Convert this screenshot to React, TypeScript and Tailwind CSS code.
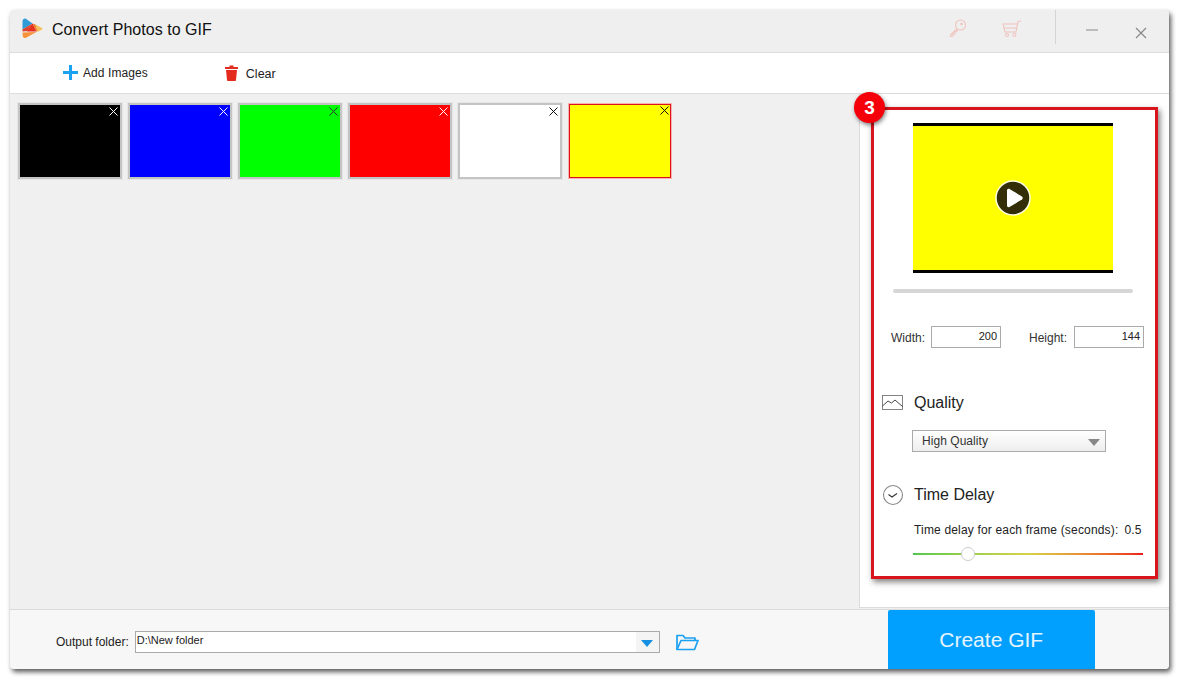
import React from "react";

const thumbs = [
  { c: "bg-[#000000]", x: "#ffffff" },
  { c: "bg-[#0000ff]", x: "#ffffff" },
  { c: "bg-[#00ff00]", x: "#333333" },
  { c: "bg-[#ff0000]", x: "#ffffff" },
  { c: "bg-[#ffffff]", x: "#111111" },
  { c: "bg-[#ffff00]", x: "#111111", sel: true },
];

function X({ color }: { color: string }) {
  return (
    <svg width="9" height="9" viewBox="0 0 9 9" className="absolute top-[2px] right-[2px]">
      <path d="M0.5 0.5L8.5 8.5M8.5 0.5L0.5 8.5" stroke={color} strokeWidth="1" fill="none" />
    </svg>
  );
}

function Logo() {
  return (
    <svg width="22" height="22" viewBox="0 0 22 22">
      <path d="M0.500 3C0.500 1.500 2 0 3.500 0.500L10.500 5.500L0.500 11.500Z" fill="#2f9bd6" />
      <path d="M0.500 11.500L10.500 5.500L5 13L0.500 13.500Z" fill="#d9432c" />
      <path d="M10.500 5.500L14.500 13.500L4.500 13.500Z" fill="#e8301f" />
      <path d="M10.500 5.500L13.500 6.500L15.500 13L14.500 13.500Z" fill="#f0782e" />
      <path d="M13.500 6.500L20 10C20.500 10.500 20.500 11 20 11.500L15.500 14Z" fill="#f5c05a" />
      <path d="M0.500 14.500L14.500 14L4 19.800C2 20.500 1 19.500 0.800 18Z" fill="#f7913a" />
    </svg>
  );
}

export default function App() {
  return (
    <div className="w-[1180px] h-[680px] bg-white pt-[10px] pl-[10px] font-['Liberation_Sans',Arial,sans-serif] text-[#1a1a1a] overflow-hidden">
      <div className="w-[1159px] h-[659px] flex flex-col rounded-[4px] bg-[#f0f0f0] shadow-[2px_3px_5px_rgba(0,0,0,0.65)] overflow-hidden">
        {/* title bar */}
        <div className="h-[43px] shrink-0 flex items-center bg-[#efefef] border-b border-[#dcdcdc] relative">
          <div className="ml-[12px] mt-[-4px] w-[22px] h-[22px]"><Logo /></div>
          <div className="ml-[8px] mt-[-2px] text-[16px] leading-[20px] text-[#111] tracking-[0.03px]">Convert Photos to GIF</div>
          <div className="ml-auto flex items-start h-full">
            <svg width="18" height="18" viewBox="0 0 18 18" className="mt-[9px]" fill="none" stroke="#f0c4bd" strokeWidth="1.1">
              <circle cx="11.500" cy="6" r="5" />
              <circle cx="12.500" cy="5" r="0.800" />
              <path d="M8 9.500L1.500 16L1.500 17.500L4 17L4 15L6 15L6 13L7.500 12.500L9 11" />
            </svg>
            <svg width="20" height="18" viewBox="0 0 20 18" className="ml-[35px] mt-[10px]" fill="none" stroke="#f0c4bd" strokeWidth="1.1">
              <path d="M19 1L16 1.500L14 12L3 12L1 4L15.500 4" />
              <path d="M2 8L15 8" />
              <circle cx="5" cy="15" r="1.500" />
              <circle cx="12.500" cy="15" r="1.500" />
            </svg>
            <div className="ml-[33px] w-px h-[34px] mt-0 bg-[#d4d4d4]" />
            <svg width="12" height="12" viewBox="0 0 12 12" className="ml-[30px] mt-[14px]" fill="none" stroke="#888" strokeWidth="1">
              <path d="M0 6H12" />
            </svg>
            <svg width="12" height="12" viewBox="0 0 12 12" className="ml-[37px] mr-[22px] mt-[17px]" fill="none" stroke="#888" strokeWidth="1.2">
              <path d="M1 1L11 11M11 1L1 11" />
            </svg>
          </div>
        </div>

        {/* toolbar */}
        <div className="h-[41px] shrink-0 flex items-center bg-white border-b border-[#dcdcdc]">
          <svg width="15" height="15" viewBox="0 0 15 15" className="ml-[53px] mt-[-2px]">
            <path d="M6 0H9V6H15V9H9V15H6V9H0V6H6Z" fill="#1ba1f2" />
          </svg>
          <span className="ml-[5px] mt-[-1px] text-[12px] leading-[14px] text-[#222] tracking-[0.08px]">Add Images</span>
          <svg width="13" height="16" viewBox="0 0 13 16" className="ml-[77px]">
            <path d="M4.500 0.500H8.500V2H13V4H0V2H4.500Z" fill="#e32b1e" />
            <path d="M1 5H12L11 15C11 15.500 10.500 16 10 16H3C2.500 16 2 15.500 2 15Z" fill="#e32b1e" />
          </svg>
          <span className="ml-[8px] mt-[2px] text-[12.500px] leading-[14px] text-[#222]">Clear</span>
        </div>

        {/* main */}
        <div className="flex-1 flex min-h-0">
          <div className="flex-1 pl-[8px] pt-[9px] flex items-start gap-[6px]">
            {thumbs.map((t, i) => (
              <div
                key={i}
                className={
                  t.sel
                    ? "w-[104px] h-[76px] border border-[#fbb0b0] shadow-[inset_0_0_0_1px_#d8141c] relative " + t.c
                    : "w-[104px] h-[76px] border-2 border-[#c4c4c4] shadow-[0_0_0_1px_#e6e6e6] relative " + t.c
                }
              >
                <X color={t.x} />
              </div>
            ))}
          </div>
          <div className="w-[310px] shrink-0 mb-px bg-white border-l border-[#dcdcdc] border-b pl-[11px] pt-[13px] relative">
            <div className="w-[287px] h-[472px] border-[3px] border-[#d8141c] shadow-[2px_3px_6px_rgba(0,0,0,0.5)] relative flex flex-col">
              {/* preview */}
              <div className="ml-[39px] mt-[13px] w-[200px] h-[150px] border-y-[3px] border-black bg-[#ffff00] flex items-center justify-center">
                <svg width="36" height="36" viewBox="0 0 36 36">
                  <circle cx="18" cy="18" r="17" fill="#332e07" stroke="#fffde0" strokeWidth="1.500" />
                  <path d="M12 10.500C12 9 13.500 8.500 14.500 9L27 16.500C28 17.200 28 18.800 27 19.500L14.500 27C13.500 27.500 12 27 12 25.500Z" fill="#ffffff" />
                </svg>
              </div>
              <div className="ml-[19px] mt-[16px] w-[240px] h-[4px] rounded-full bg-[#d6d6d6]" />
              {/* size */}
              <div className="mt-[33px] flex items-center text-[12px] text-[#333]">
                <span className="ml-[17px] w-[40px] mt-[1px]">Width:</span>
                <div className="w-[70px] h-[22px] border border-[#aaaaaa] bg-white text-right pr-[3px] leading-[18px] text-[11px] text-[#222]">200</div>
                <span className="ml-[28px] w-[45px] mt-[1px]">Height:</span>
                <div className="w-[70px] h-[22px] border border-[#aaaaaa] bg-white text-right pr-[3px] leading-[18px] text-[11px] text-[#222]">144</div>
              </div>
              {/* quality */}
              <div className="mt-[43px] flex items-center h-[22px]">
                <svg width="21" height="15" viewBox="0 0 21 15" className="ml-[8px] mt-[1px]" fill="none" stroke="#777" strokeWidth="0.9">
                  <rect x="0.500" y="0.500" width="20" height="14" />
                  <path d="M0.500 11L6 6L9.500 8L13 5L20.500 11.500" stroke="#333" />
                </svg>
                <span className="ml-[11px] mt-[2px] text-[16px] leading-[20px] text-[#222]">Quality</span>
              </div>
              <div className="ml-[38px] mt-[17px] w-[194px] h-[22px] border border-[#aaaaaa] bg-gradient-to-b from-white to-[#eeeeee] flex items-center pl-[9px] text-[12px] text-[#333] relative">
                <span className="mt-[-1px] tracking-[0.05px]">High Quality</span>
                <svg width="12" height="7" viewBox="0 0 12 7" className="absolute right-[5px] top-[8px]">
                  <path d="M0 0H12L6 7Z" fill="#888888" />
                </svg>
              </div>
              {/* time delay */}
              <div className="mt-[32px] flex items-center h-[22px]">
                <svg width="22" height="22" viewBox="0 0 22 22" className="ml-[8px]" fill="none">
                  <circle cx="11" cy="11" r="9.500" stroke="#888" strokeWidth="1.100" />
                  <path d="M6.500 10.500L10 13L15 9.500" stroke="#333" strokeWidth="1.100" />
                </svg>
                <span className="ml-[10px] text-[16px] leading-[20px] text-[#222]">Time Delay</span>
              </div>
              <div className="ml-[40px] mt-[17px] text-[12px] leading-[14px] text-[#222] whitespace-nowrap tracking-[0.17px]">
                Time delay for each frame (seconds):<span className="ml-[6px]">0.5</span>
              </div>
              <div className="ml-[39px] mt-[16px] w-[230px] h-[2px] bg-gradient-to-r from-[#4ec94e] via-[#d6d24a] to-[#e81c1c] relative">
                <div className="absolute left-[48px] top-[-6px] w-[14px] h-[14px] rounded-full bg-white border border-[#cccccc]" />
              </div>
            </div>
            {/* badge */}
            <div className="absolute left-[-6px] top-[-2px] w-[31px] h-[31px] rounded-full bg-[#f5000a] shadow-[1px_2px_4px_rgba(0,0,0,0.5)] flex items-center justify-center text-white font-bold text-[19px] leading-none">
              3
            </div>
          </div>
        </div>

        {/* footer */}
        <div className="h-[60px] shrink-0 flex items-start bg-[#f7f7f7] border-t border-[#dcdcdc]">
          <span className="ml-[46px] mt-[25px] text-[12px] leading-[14px] text-[#222]">Output folder:</span>
          <div className="ml-[6px] mt-[21px] w-[525px] h-[22px] border border-[#aaaaaa] bg-white flex items-center pl-[1px] text-[11px] text-[#222] relative">
            <span className="mt-[-3px]">D:\New folder</span>
            <div className="absolute right-0 top-0 h-full w-[23px] bg-[#f4f4f4] flex items-center justify-center">
              <svg width="12" height="7" viewBox="0 0 12 7" className="mt-[3px]">
                <path d="M0 0H12L6 7Z" fill="#1590e0" />
              </svg>
            </div>
          </div>
          <svg width="23" height="17" viewBox="0 0 23 17" className="ml-[16px] mt-[24px]" fill="none" stroke="#1ba1f2" strokeWidth="1.700" strokeLinejoin="round">
            <path d="M1 15.500V1.500H7L9 4H19V6.500" />
            <path d="M1 15.500H18.500L22 6.500H5L1 15.500Z" />
          </svg>
          <div className="ml-[189px] w-[207px] h-[59px] bg-[#019ffe] rounded-t-[2px] flex items-center justify-center text-white/90 text-[21px] leading-none">
            Create GIF
          </div>
        </div>
      </div>
    </div>
  );
}
